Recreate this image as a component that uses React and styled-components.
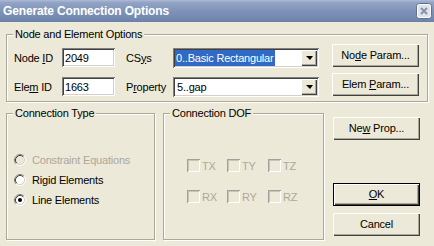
import React from "react";
import styled, { createGlobalStyle } from "styled-components";

const Global = createGlobalStyle`
html, body {
  margin: 0;
  padding: 0;
  background: #ECE9D8;
}
body {
  font-family: "Liberation Sans", Arial, sans-serif;
  font-size: 11px;
  letter-spacing: -0.2px;
  color: #000;
}
`;

function RadioMark({ checked, disabled }) {
  return (
    <svg width="12" height="12" viewBox="0 0 12 12">
      <circle cx="6" cy="6" r="4.5" fill={disabled ? "#ECE9D8" : "#fff"} />
      <path d="M2.11 9.89 A5.5 5.5 0 0 1 9.89 2.11" fill="none" stroke="#808080" />
      <path d="M9.89 2.11 A5.5 5.5 0 0 1 2.11 9.89" fill="none" stroke="#fff" />
      <path d="M2.82 9.18 A4.5 4.5 0 0 1 9.18 2.82" fill="none" stroke="#404040" />
      <path d="M9.18 2.82 A4.5 4.5 0 0 1 2.82 9.18" fill="none" stroke="#D4D0C8" />
      {checked && <circle cx="6" cy="6" r="2" fill="#000" />}
    </svg>
  );
}

function CloseIcon() {
  return (
    <svg width="16" height="16" viewBox="0 0 16 16">
      <rect x="0.5" y="0.5" width="15" height="15" rx="3" fill="#dde2eb" stroke="#5d6e90" />
      <rect x="1.5" y="1.5" width="13" height="13" rx="2" fill="none" stroke="#fff" />
      <path d="M5 5 L11 11 M11 5 L5 11" stroke="#8a92a6" strokeWidth="2" />
    </svg>
  );
}

function App() {
  return (
    <Window>
      <Global />
      <TitleBar>
        <Title>Generate Connection Options</Title>
        <CloseIcon />
      </TitleBar>
      <Body>
        <Group>
          <Legend>Node and Element Options</Legend>
          <TopGrid>
            <Label>Node <u>I</u>D</Label>
            <Field readOnly value="2049" />
            <Label>CS<u>y</u>s</Label>
            <Combo>
              <Selected>0..Basic Rectangular</Selected>
              <DropButton><Arrow /></DropButton>
            </Combo>
            <Button>No<u>d</u>e Param...</Button>

            <Label>Ele<u>m</u> ID</Label>
            <Field readOnly value="1663" />
            <Label>P<u>r</u>operty</Label>
            <Combo>
              <ComboText>5..gap</ComboText>
              <DropButton><Arrow /></DropButton>
            </Combo>
            <Button>Elem <u>P</u>aram...</Button>
          </TopGrid>
        </Group>

        <BottomRow>
          <Group $width={149}>
            <Legend>Connection Type</Legend>
            <RadioList>
              <RadioRow $disabled>
                <RadioMark disabled />
                Constraint Equations
              </RadioRow>
              <RadioRow>
                <RadioMark />
                Rigid Elements
              </RadioRow>
              <RadioRow>
                <RadioMark checked />
                Line Elements
              </RadioRow>
            </RadioList>
          </Group>

          <Group $width={161}>
            <Legend>Connection DOF</Legend>
            <DofGrid>
              {["TX", "TY", "TZ", "RX", "RY", "RZ"].map(dof => (
                <CheckItem key={dof}>
                  <CheckBox />
                  {dof}
                </CheckItem>
              ))}
            </DofGrid>
          </Group>

          <ButtonColumn>
            <Button>Ne<u>w</u> Prop...</Button>
            <Button $default><u>O</u>K</Button>
            <Button>Cancel</Button>
          </ButtonColumn>
        </BottomRow>
      </Body>
    </Window>
  );
}

const Window = styled.div`
width: 434px;
height: 246px;
display: flex;
flex-direction: column;
background: #ECE9D8;
overflow: hidden;
`;

const TitleBar = styled.div`
height: 22px;
flex: none;
display: flex;
align-items: center;
justify-content: space-between;
padding: 0 2px 0 3px;
background: linear-gradient(180deg, #aebbd5 0%, #92a3c5 12%, #7f93b9 50%, #7287ae 88%, #6b80a7 100%);
`;

const Title = styled.div`
color: #fff;
font-weight: bold;
font-size: 12px;
letter-spacing: -0.15px;
`;

const Body = styled.div`
display: flex;
flex-direction: column;
gap: 5px;
padding: 6px 6px 0 6px;
`;

const Group = styled.fieldset`
margin: 0;
padding: 0;
min-width: 0;
display: flex;
flex-direction: column;
border: 1px solid #ACA899;
box-shadow: 1px 1px 0 #fff, inset 1px 1px 0 #fff;
${props => props.$width && `
width: ${props.$width}px;
flex: none;
box-sizing: border-box;
`}
`;

const Legend = styled.legend`
margin-left: 6px;
padding: 0 2px;
line-height: 13px;
font-size: 11px;
background: #ECE9D8;
`;

const TopGrid = styled.div`
display: grid;
grid-template-columns: 48px 64px 47px 159px 87px;
grid-template-rows: 29px 29px;
align-items: center;
padding: 2px 0 0 7px;
`;

const Label = styled.div`
white-space: nowrap;
`;

const sunken = `
box-shadow: inset 1px 1px 0 #808080, inset -1px -1px 0 #fff, inset 2px 2px 0 #404040, inset -2px -2px 0 #D4D0C8;
background: #fff;
`;

const Field = styled.input`
box-sizing: border-box;
width: 53px;
height: 19px;
border: none;
outline: none;
padding: 0 3px;
font-family: "Liberation Sans", Arial, sans-serif;
font-size: 11px;
letter-spacing: -0.2px;
color: #000;
${sunken}
`;

const Combo = styled.div`
box-sizing: border-box;
width: 146px;
height: 20px;
padding: 2px;
display: flex;
align-items: stretch;
${sunken}
`;

const Selected = styled.span`
line-height: 16px;
padding: 0 1px;
background: #316AC5;
color: #fff;
`;

const ComboText = styled.span`
line-height: 16px;
padding: 0 2px;
`;

const DropButton = styled.div`
margin-left: auto;
width: 16px;
height: 16px;
box-sizing: border-box;
display: flex;
align-items: center;
justify-content: center;
background: #ECE9D8;
box-shadow: inset 1px 1px 0 #fff, inset -1px -1px 0 #404040, inset -2px -2px 0 #ACA899;
`;

const Arrow = styled.span`
width: 0;
height: 0;
border-left: 4px solid transparent;
border-right: 3px solid transparent;
border-top: 4px solid #000;
margin-top: 1px;
`;

const Button = styled.div`
box-sizing: border-box;
width: 87px;
height: 23px;
line-height: 23px;
text-align: center;
white-space: nowrap;
background: #ECE9D8;
align-self: start;
margin-top: 1px;
box-shadow: inset 1px 1px 0 #fff, inset -1px -1px 0 #404040, inset -2px -2px 0 #ACA899;

${props => props.$default && `
box-shadow: inset 0 0 0 1px #000, inset 2px 2px 0 #fff, inset -2px -2px 0 #404040, inset -3px -3px 0 #ACA899;
`}
`;

const BottomRow = styled.div`
display: flex;
gap: 8px;
height: 133px;
`;

const RadioList = styled.div`
flex: 1;
display: flex;
flex-direction: column;
justify-content: center;
padding-left: 7px;
`;

const RadioRow = styled.div`
height: 20px;
display: flex;
align-items: center;
gap: 6px;
color: ${props => props.$disabled ? "#ACA899" : "#000"};
`;

const DofGrid = styled.div`
flex: 1;
display: grid;
grid-template-columns: 40px 41px auto;
align-content: center;
row-gap: 18px;
padding: 3px 0 0 23px;
`;

const CheckItem = styled.div`
display: flex;
align-items: center;
gap: 2px;
height: 13px;
color: #ACA899;
`;

const CheckBox = styled.span`
width: 13px;
height: 13px;
box-sizing: border-box;
background: #ECE9D8;
box-shadow: inset 1px 1px 0 #A0A0A0, inset -1px -1px 0 #fff, inset 2px 2px 0 #C9C5B5, inset -2px -2px 0 #ECE9D8;
`;

const ButtonColumn = styled.div`
display: flex;
flex-direction: column;
margin-left: 1px;
padding: 9px 0 4px 0;

& > div:nth-child(2) {
  margin-top: auto;
}
& > div:nth-child(3) {
  margin-top: 7px;
}
`;

export default App;
